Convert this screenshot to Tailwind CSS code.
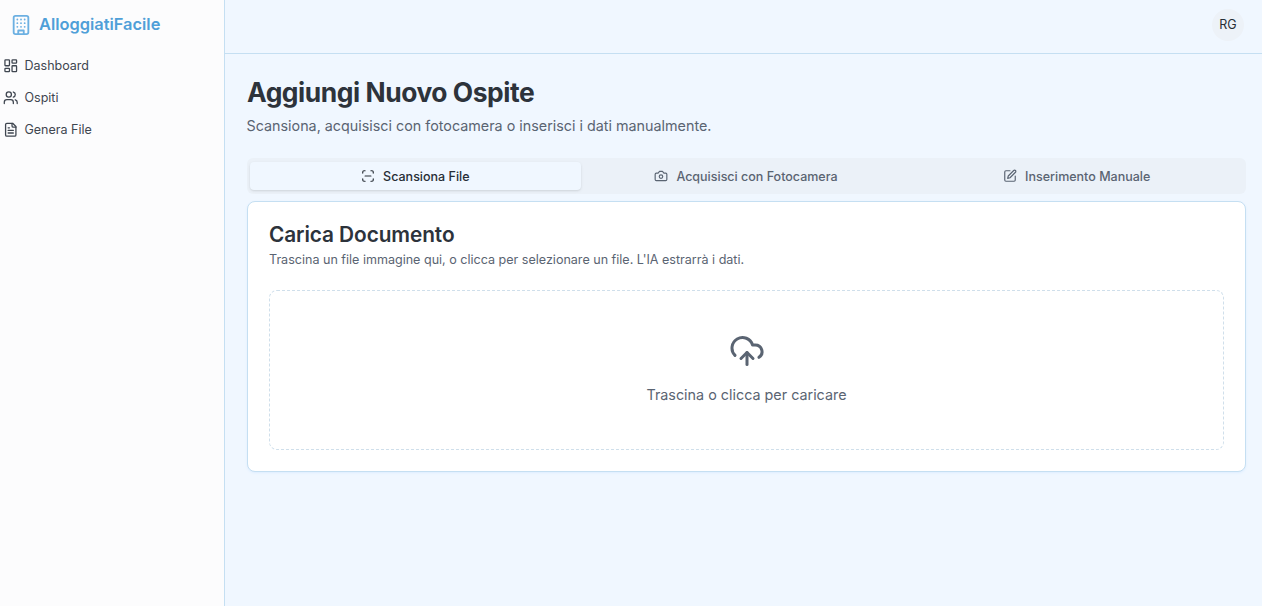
<!DOCTYPE html>
<html lang="it">
<head>
<meta charset="utf-8">
<title>AlloggiatiFacile</title>
<script src="https://cdn.jsdelivr.net/npm/@tailwindcss/browser@4"></script>
</head>
<body class="font-['Inter',sans-serif] bg-[#f0f7ff] text-[#272e36]">
<div class="flex h-[606px] w-[1262px] overflow-hidden">
  <aside class="w-[225px] shrink-0 bg-[#fcfcfd] border-r border-[#c5dff2] flex flex-col">
    <div class="h-[49px] flex items-center gap-[7px] pl-[10px]">
      <svg class="w-[22px] h-[22px] text-[#6cb0e2]" viewBox="0 0 24 24" fill="none" stroke="currentColor" stroke-width="2" stroke-linecap="round" stroke-linejoin="round"><rect x="4" y="2" width="16" height="20" rx="2"/><path d="M9 22v-4h6v4"/><path d="M8 6h.01M12 6h.01M16 6h.01M8 10h.01M12 10h.01M16 10h.01M8 14h.01M12 14h.01M16 14h.01"/></svg>
      <span class="text-[#4f9fd8] font-semibold text-[16.400px] leading-6 -mt-[2px]">AlloggiatiFacile</span>
    </div>
    <nav class="flex flex-col pt-[1px]">
      <a class="h-[32px] flex items-center gap-[6.500px] pl-[2.500px] text-[12.500px] text-[#3f4650]">
        <svg class="w-[15.500px] h-[15.500px]" viewBox="0 0 24 24" fill="none" stroke="currentColor" stroke-width="2" stroke-linecap="round" stroke-linejoin="round"><rect x="3" y="3" width="7" height="9" rx="1"/><rect x="14" y="3" width="7" height="5" rx="1"/><rect x="14" y="12" width="7" height="9" rx="1"/><rect x="3" y="16" width="7" height="5" rx="1"/></svg>
        <span>Dashboard</span>
      </a>
      <a class="h-[32px] flex items-center gap-[6.500px] pl-[2.500px] text-[12.500px] text-[#3f4650]">
        <svg class="w-[15.500px] h-[15.500px]" viewBox="0 0 24 24" fill="none" stroke="currentColor" stroke-width="2" stroke-linecap="round" stroke-linejoin="round"><path d="M16 21v-2a4 4 0 0 0-4-4H6a4 4 0 0 0-4 4v2"/><circle cx="9" cy="7" r="4"/><path d="M22 21v-2a4 4 0 0 0-3-3.870"/><path d="M16 3.130a4 4 0 0 1 0 7.750"/></svg>
        <span>Ospiti</span>
      </a>
      <a class="h-[32px] flex items-center gap-[6.500px] pl-[2.500px] text-[12.500px] text-[#3f4650]">
        <svg class="w-[15.500px] h-[15.500px]" viewBox="0 0 24 24" fill="none" stroke="currentColor" stroke-width="2" stroke-linecap="round" stroke-linejoin="round"><path d="M15 2H6a2 2 0 0 0-2 2v16a2 2 0 0 0 2 2h12a2 2 0 0 0 2-2V7Z"/><path d="M14 2v4a2 2 0 0 0 2 2h4"/><path d="M10 9H8M16 13H8M16 17H8"/></svg>
        <span>Genera File</span>
      </a>
    </nav>
  </aside>
  <div class="flex-1 flex flex-col min-w-0">
    <header class="h-[54px] border-b border-[#c5dff2] flex items-center justify-end pr-[18px] pb-[3px]">
      <div class="w-[32px] h-[32px] rounded-full bg-[#edf2f8] flex items-center justify-center text-[12.500px] font-normal text-[#272e36]">RG</div>
    </header>
    <main class="pl-[22px] pr-[16px] pt-[23px] flex flex-col">
      <h1 class="text-[26.400px] leading-[30px] font-bold tracking-[-0.45px] text-[#2d333b]">Aggiungi Nuovo Ospite</h1>
      <p class="mt-[9px] -ml-[0.5px] text-[14.340px] leading-[20px] text-[#5a6472]">Scansiona, acquisisci con fotocamera o inserisci i dati manualmente.</p>
      <div class="mt-[22px] h-[36px] rounded-md bg-[#ebf1f8] p-[4px] pl-[3px] grid grid-cols-3 text-[12.500px] font-medium text-[#5a6472]">
        <div class="rounded-[4px] bg-[#f0f7ff] text-[#272e36] shadow-sm flex items-center justify-center gap-2">
          <svg class="w-[14px] h-[14px]" viewBox="0 0 24 24" fill="none" stroke="currentColor" stroke-width="2" stroke-linecap="round" stroke-linejoin="round"><path d="M3 7V5a2 2 0 0 1 2-2h2M17 3h2a2 2 0 0 1 2 2v2M21 17v2a2 2 0 0 1-2 2h-2M7 21H5a2 2 0 0 1-2-2v-2M7 12h10"/></svg>
          <span class="translate-y-[1px]">Scansiona File</span>
        </div>
        <div class="flex items-center justify-center gap-2">
          <svg class="w-[14px] h-[14px]" viewBox="0 0 24 24" fill="none" stroke="currentColor" stroke-width="2" stroke-linecap="round" stroke-linejoin="round"><path d="M14.500 4h-5L7 7H4a2 2 0 0 0-2 2v9a2 2 0 0 0 2 2h16a2 2 0 0 0 2-2V9a2 2 0 0 0-2-2h-3l-2.500-3z"/><circle cx="12" cy="13" r="3"/></svg>
          <span class="translate-y-[1px]">Acquisisci con Fotocamera</span>
        </div>
        <div class="flex items-center justify-center gap-2">
          <svg class="w-[14px] h-[14px]" viewBox="0 0 24 24" fill="none" stroke="currentColor" stroke-width="2" stroke-linecap="round" stroke-linejoin="round"><path d="M12 3H5a2 2 0 0 0-2 2v14a2 2 0 0 0 2 2h14a2 2 0 0 0 2-2v-7"/><path d="M18.375 2.625a2.121 2.121 0 1 1 3 3L12 15l-4 1 1-4Z"/></svg>
          <span class="translate-y-[1px]">Inserimento Manuale</span>
        </div>
      </div>
      <section class="mt-[7px] h-[271px] rounded-lg border border-[#c5dff2] bg-white shadow-sm shadow-blue-200/30 px-[21px] pt-[21px]">
        <h2 class="text-[20.800px] leading-[24px] font-semibold tracking-[-0.08px] text-[#2d333b]">Carica Documento</h2>
        <p class="mt-[4px] text-[12.550px] leading-[18px] text-[#5a6472]">Trascina un file immagine qui, o clicca per selezionare un file. L'IA estrarrà i dati.</p>
        <div class="mt-[21px] h-[160px] rounded-lg border border-dashed border-[#cfdfeb] flex flex-col items-center justify-center">
          <svg class="w-[36px] h-[36px] -mt-[3px] text-[#5a6472]" viewBox="0 0 24 24" fill="none" stroke="currentColor" stroke-width="2" stroke-linecap="round" stroke-linejoin="round"><path d="M12 13v8"/><path d="M4 14.899A7 7 0 1 1 15.710 8h1.790a4.500 4.500 0 0 1 2.500 8.242"/><path d="m8 17 4-4 4 4"/></svg>
          <p class="mt-[16px] text-[14.350px] leading-[20px] text-[#5a6472]">Trascina o clicca per caricare</p>
        </div>
      </section>
    </main>
  </div>
</div>
</body>
</html>
